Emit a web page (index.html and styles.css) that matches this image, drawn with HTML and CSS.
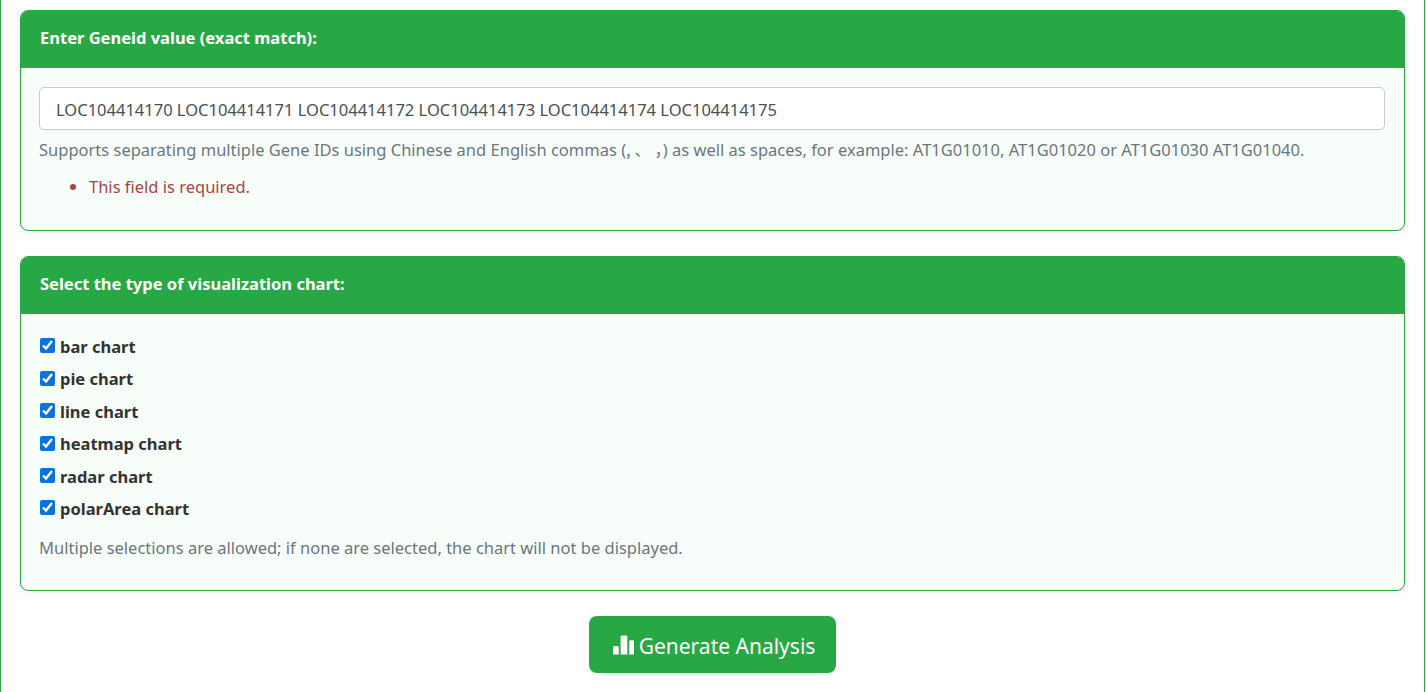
FILE: index.html
```html
<!DOCTYPE html>
<html lang="en">
<head>
<meta charset="utf-8">
<title>Generate Analysis</title>
<link rel="stylesheet" href="styles.css">
</head>
<body>
<main class="shell">
  <section class="card">
    <h2 class="card-header">Enter Geneid value (exact match):</h2>
    <div class="card-body body-gene">
      <input class="gene-input" type="text" value="LOC104414170 LOC104414171 LOC104414172 LOC104414173 LOC104414174 LOC104414175">
      <p class="help">Supports separating multiple Gene IDs using Chinese and English commas (<span class="cjk">, 、 ，</span>) as well as spaces, for example: AT1G01010, AT1G01020 or AT1G01030 AT1G01040.</p>
      <ul class="errors"><li>This field is required.</li></ul>
    </div>
  </section>
  <section class="card">
    <h2 class="card-header">Select the type of visualization chart:</h2>
    <div class="card-body body-chart">
      <label class="check"><input type="checkbox" checked>bar chart</label>
      <label class="check"><input type="checkbox" checked>pie chart</label>
      <label class="check"><input type="checkbox" checked>line chart</label>
      <label class="check"><input type="checkbox" checked>heatmap chart</label>
      <label class="check"><input type="checkbox" checked>radar chart</label>
      <label class="check"><input type="checkbox" checked>polarArea chart</label>
      <p class="help help-chart">Multiple selections are allowed; if none are selected, the chart will not be displayed.</p>
    </div>
  </section>
  <div class="actions">
    <button class="btn" type="button">
      <svg class="btn-icon" viewBox="0 0 22 20" aria-hidden="true"><path d="M1.5 11h3A1.5 1.5 0 0 1 6 12.500V20H0v-7.500A1.500 1.500 0 0 1 1.500 11zM9.500 0h4A1.500 1.500 0 0 1 15 1.500V20H8V1.500A1.500 1.500 0 0 1 9.500 0zM18.500 5h2A1.500 1.500 0 0 1 22 6.500V20h-5V6.500A1.500 1.500 0 0 1 18.500 5z"/></svg>
      Generate Analysis
    </button>
  </div>
</main>
</body>
</html>
```
FILE: styles.css
```css
* { box-sizing: border-box; }
html, body { margin: 0; height: 692px; overflow: hidden; background: #fff; }
body { font-family: "Noto Sans", "Noto Sans CJK SC", sans-serif; font-size: 16.5px; color: #212529; }
.shell {
  width: 1425px;
  height: 720px;
  padding: 10px 19px 0 19px;
  border-left: 1px solid #28a745;
  border-right: 1px solid #28a745;
  display: flex;
  flex-direction: column;
  gap: 25px;
}
.card {
  border: 1px solid #28a745;
  border-radius: 8px;
  background: #f8fffa;
  box-shadow: 0 2px 8px rgba(0,0,0,.05);
  overflow: hidden;
}
.card-header {
  margin: -1px -1px 0;
  height: 58px;
  padding: 0 20px 4px;
  display: flex;
  align-items: center;
  background: #28a745;
  color: #fff;
  font-size: 16.5px;
  font-weight: 700;
}
.body-gene { padding: 19px 19px 31px 18px; }
.gene-input {
  display: block;
  width: 100%;
  height: 43px;
  padding: 2px 16px 0;
  border: 1px solid #ccc;
  border-radius: 5px;
  background: #fff;
  color: #495057;
  font: inherit;
}
.help { margin: 7px 0 0; color: #6c757d; line-height: 24px; white-space: nowrap; }
.cjk { font-family: "Noto Sans CJK SC", sans-serif; }
.errors { margin: 13px 0 0; padding-left: 50px; color: #a94442; line-height: 24px; list-style: disc; }
.body-chart { padding: 16.3px 18px 30px; }
.check { display: flex; align-items: center; height: 32.4px; font-weight: 700; color: #333; }
.check input { width: 15px; height: 15px; margin: 0 5px 1px 1px; accent-color: #0a72dd; }
.help-chart { margin-top: 11.7px; }
.actions { display: flex; justify-content: center; }
.btn {
  display: inline-flex;
  align-items: center;
  gap: 5px;
  width: 247px;
  height: 57px;
  padding: 2px 0 0 3px;
  justify-content: center;
  border: 0;
  border-radius: 8px;
  background: #28a745;
  color: #fff;
  font: inherit;
  font-size: 21px;
}
.btn-icon { width: 21px; height: 20px; margin-bottom: 2px; fill: #fff; }
```
